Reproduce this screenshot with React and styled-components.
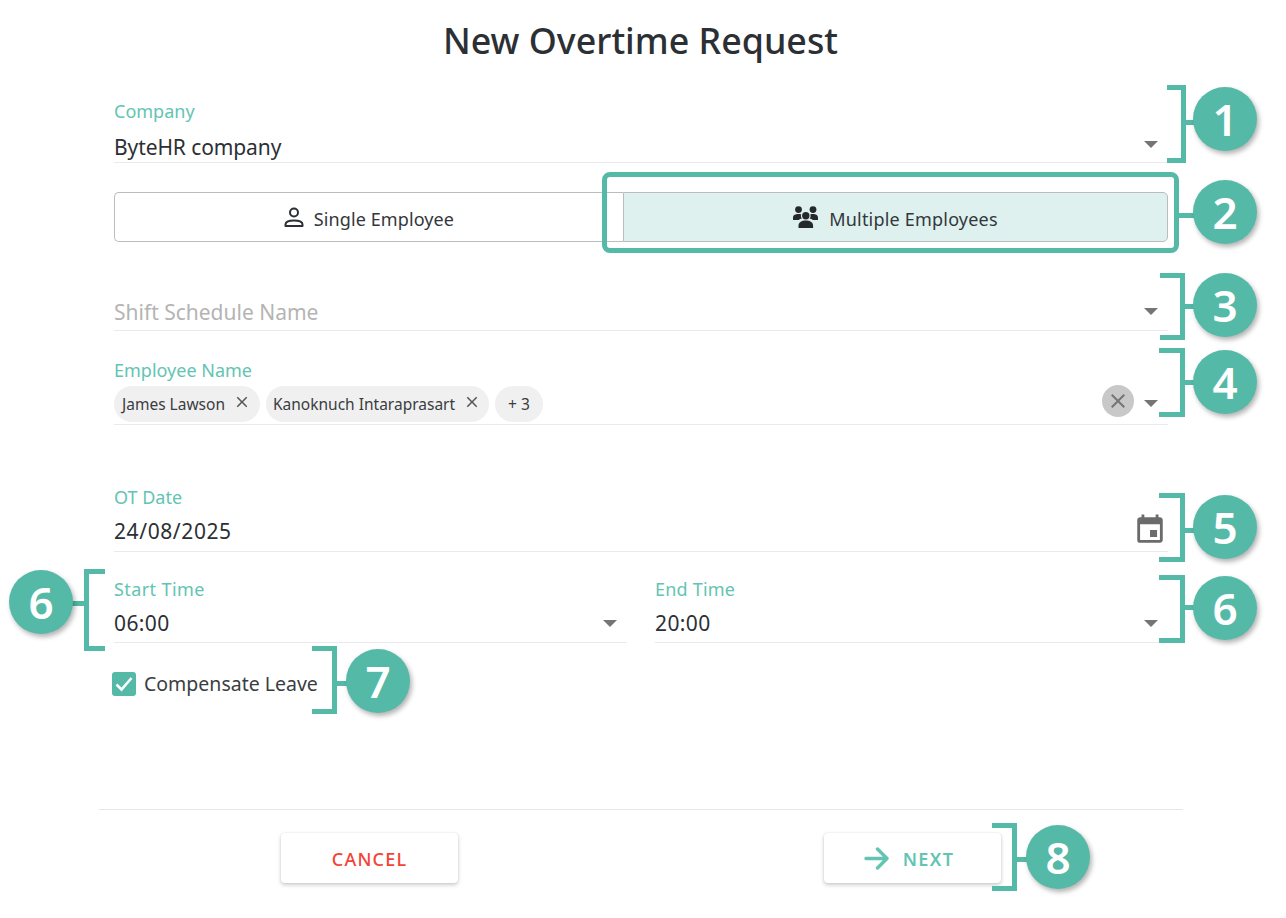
import React from "react";
import styled, { createGlobalStyle } from "styled-components";
import { MdClose, MdEvent } from "react-icons/md";

const TEAL = "#55b9a8";
const LABEL = "#63c4b2";
const TEXT = "#2c3034";
const LINE = "#e9e9ee";

const GlobalStyle = createGlobalStyle`
  html, body {
    margin: 0;
    padding: 0;
    background: #fff;
    font-family: "Noto Sans", "Open Sans", sans-serif;
    color: ${TEXT};
  }
`;

const Page = styled.div`
  position: relative;
  width: 1286px;
  height: 918px;
  overflow: hidden;
  padding-top: 14px;
  box-sizing: border-box;
`;

const Title = styled.h1`
  margin: 0 5px 0 0;
  font-size: 35.8px;
  line-height: 52px;
  font-weight: 500;
  text-align: center;
`;

const Form = styled.div`
  width: 1054px;
  margin: 33px 0 0 114px;
  display: flex;
  flex-direction: column;
`;

const Field = styled.div`
  position: relative;
  box-sizing: border-box;
  height: ${(p) => p.$height}px;
  margin-top: ${(p) => p.$top || 0}px;
  width: ${(p) => (p.$width ? `${p.$width}px` : "auto")};
  border-bottom: 1px solid ${LINE};
`;

const Label = styled.div`
  color: ${LABEL};
  font-size: 18px;
  line-height: 24px;
  letter-spacing: ${(p) => p.$spacing || 0}px;
`;

const Value = styled.div`
  font-size: 21px;
  line-height: 30px;
  margin-top: ${(p) => p.$gap ?? 7}px;
  letter-spacing: ${(p) => p.$spacing || 0}px;
  color: ${(p) => (p.$placeholder ? "#b4b4b4" : TEXT)};
`;

const Caret = styled.span`
  position: absolute;
  right: 10px;
  bottom: ${(p) => p.$bottom || 14}px;
  width: 0;
  height: 0;
  border-left: 7.5px solid transparent;
  border-right: 7.5px solid transparent;
  border-top: 7px solid #757575;
`;

const Toggle = styled.div`
  display: flex;
  height: 50px;
  margin-top: 29px;
`;

const ToggleButton = styled.div`
  box-sizing: border-box;
  width: ${(p) => p.$width}px;
  display: flex;
  align-items: center;
  justify-content: center;
  gap: ${(p) => (p.$active ? 11 : 10)}px;
  font-size: 18px;
  letter-spacing: ${(p) => (p.$active ? 0.2 : 0.1)}px;
  color: #33373b;
  background: ${(p) => (p.$active ? "#def1ee" : "#fff")};
  border: 1px solid #b9bdbd;
  border-right-width: ${(p) => (p.$active ? 1 : 0)}px;
  border-radius: ${(p) => (p.$active ? "0 5px 5px 0" : "5px 0 0 5px")};
  span {
    margin-top: 3px;
  }
`;

const ChipRow = styled.div`
  display: flex;
  gap: 6px;
  margin-top: 4px;
`;

const Chip = styled.div`
  display: flex;
  align-items: center;
  height: 36px;
  padding: ${(p) => p.$padding};
  gap: 8px;
  border-radius: 18px;
  background: #f0f0f1;
  color: #3a3d40;
  font-size: 15.5px;
  svg {
    margin-top: -5px;
    color: #555;
  }
`;

const ClearButton = styled.span`
  position: absolute;
  right: 34px;
  bottom: 7px;
  width: 32px;
  height: 32px;
  border-radius: 50%;
  background: #c8c8c8;
  color: #757575;
  display: flex;
  align-items: center;
  justify-content: center;
`;

const CalendarIcon = styled(MdEvent)`
  position: absolute;
  right: 1px;
  bottom: 4px;
  color: #6b6b6b;
`;

const TimeRow = styled.div`
  display: flex;
  justify-content: space-between;
`;

const CheckRow = styled.label`
  display: flex;
  align-items: center;
  gap: 8px;
  height: 24px;
  margin: 29px 0 0 -2px;
  font-size: 19.5px;
  color: #3a3d40;
  span:last-child {
    margin-top: -2px;
  }
`;

const CheckBox = styled.span`
  width: 24px;
  height: 24px;
  border-radius: 3px;
  background: ${TEAL};
  color: #fff;
  display: flex;
  align-items: center;
  justify-content: center;
`;

const Footer = styled.div`
  box-sizing: border-box;
  width: 1084px;
  height: 74px;
  margin: 113px 0 0 99px;
  border-top: 1px solid #e6e6e6;
  display: flex;
  align-items: flex-end;
  padding-left: 182px;
  gap: 366px;
`;

const ActionButton = styled.div`
  box-sizing: border-box;
  width: 177px;
  height: 50px;
  display: flex;
  align-items: center;
  justify-content: center;
  gap: 14px;
  padding-right: ${(p) => p.$inset || 0}px;
  border-radius: 4px;
  background: #fff;
  box-shadow: 0 2px 4px rgba(0, 0, 0, 0.2), 0 0 2px rgba(0, 0, 0, 0.1);
  font-size: 18px;
  font-weight: ${(p) => (p.$inset ? 600 : 500)};
  letter-spacing: ${(p) => (p.$inset ? 1.4 : 1.2)}px;
  color: ${(p) => p.$color};
  span {
    margin-top: 2px;
  }
`;

// annotation overlay: numbered badges, brackets and the highlight box
const Badge = styled.div`
  position: absolute;
  left: ${(p) => p.$x - 32}px;
  top: ${(p) => p.$y - 32}px;
  width: 64px;
  height: 64px;
  border-radius: 50%;
  background: ${TEAL};
  box-shadow: 2px 3px 5px rgba(0, 0, 0, 0.3);
  color: #fff;
  font-size: 44px;
  font-weight: 600;
  display: flex;
  align-items: center;
  justify-content: center;
`;

const Bracket = styled.div`
  position: absolute;
  box-sizing: border-box;
  left: ${(p) => p.$x}px;
  top: ${(p) => p.$y}px;
  width: ${(p) => p.$w}px;
  height: ${(p) => p.$h}px;
  border: 5px solid ${TEAL};
  ${(p) => (p.$flip ? "border-right: none;" : "border-left: none;")}
`;

const Connector = styled.div`
  position: absolute;
  left: ${(p) => p.$x}px;
  top: ${(p) => p.$y}px;
  width: ${(p) => p.$w}px;
  height: 5px;
  background: ${TEAL};
`;

const Highlight = styled.div`
  position: absolute;
  box-sizing: border-box;
  left: 602px;
  top: 172px;
  width: 577px;
  height: 81px;
  border: 5px solid ${TEAL};
  border-radius: 8px;
`;

const PersonIcon = () => (
  <svg width="20" height="20" viewBox="0 0 20 20" fill="none" stroke="#2c3034" strokeWidth="2">
    <circle cx="10" cy="5.5" r="4" />
    <path d="M1.5 19v-1.5c0-2.6 3.8-4 8.5-4s8.5 1.4 8.5 4V19z" strokeLinejoin="round" />
  </svg>
);

const GroupIcon = () => (
  <svg width="25" height="22" viewBox="0 0 25 22" fill="#26292c">
    <circle cx="5.5" cy="3.6" r="3.4" />
    <circle cx="20" cy="3.6" r="3.4" />
    <circle cx="12.8" cy="9.8" r="3.7" />
    <path d="M0 14v-2.5C0 9 2.5 8 5.5 8c1.1 0 2 .1 2.8.4-.3.5-.4 1-.4 1.5 0 1 .4 2 1 2.6-1.4.3-2.5.8-3.2 1.5z" />
    <path d="M25 14v-2.5C25 9 22.5 8 20 8c-1.1 0-2 .1-2.8.4.3.5.4 1 .4 1.5 0 1-.4 2-1 2.6 1.4.3 2.5.8 3.2 1.5z" />
    <path d="M5.5 22v-2.5c0-3 3-5 7.3-5s7.3 2 7.3 5V22z" />
  </svg>
);

const CheckIcon = () => (
  <svg width="18" height="16" viewBox="0 0 18 16" fill="none" stroke="#fff" strokeWidth="2.6">
    <path d="M1.5 8.5l5 5L16.5 2" />
  </svg>
);

const ArrowIcon = () => (
  <svg width="25" height="23" viewBox="0 0 25 23" fill="none" stroke={LABEL} strokeWidth="3.4" strokeLinecap="round" strokeLinejoin="round">
    <path d="M2 11.5h20M13.5 2l9.5 9.5-9.5 9.5" />
  </svg>
);

const brackets = [
  { x: 1167, y: 85, w: 19, h: 78, cy: 120, n: 1, bx: 1225, by: 119 },
  { x: 1160, y: 273, w: 25, h: 67, cy: 304, n: 3, bx: 1225, by: 305 },
  { x: 1159, y: 348, w: 26, h: 69, cy: 380, n: 4, bx: 1225, by: 382 },
  { x: 1159, y: 493, w: 26, h: 69, cy: 528, n: 5, bx: 1225, by: 527 },
  { x: 1159, y: 575, w: 26, h: 68, cy: 605, n: 6, bx: 1225, by: 608 },
  { x: 312, y: 646, w: 25, h: 68, cy: 681, n: 7, bx: 378, by: 681 },
  { x: 992, y: 823, w: 25, h: 68, cy: 857, n: 8, bx: 1058, by: 857 },
];

const App = () => (
  <>
    <GlobalStyle />
    <Page>
      <Title>New Overtime Request</Title>
      <Form>
        <Field $height={64}>
          <Label>Company</Label>
          <Value $gap={9} $spacing={-0.1}>ByteHR company</Value>
          <Caret />
        </Field>
        <Toggle>
          <ToggleButton $width={509}>
            <PersonIcon />
            <span>Single Employee</span>
          </ToggleButton>
          <ToggleButton $width={545} $active>
            <GroupIcon />
            <span>Multiple Employees</span>
          </ToggleButton>
        </Toggle>
        <Field $height={59} $top={30}>
          <Value $gap={25} $placeholder>Shift Schedule Name</Value>
          <Caret $bottom={15} />
        </Field>
        <Field $height={67} $top={27}>
          <Label>Employee Name</Label>
          <ChipRow>
            <Chip $padding="0 9px 0 8px">
              James Lawson
              <MdClose size={18} />
            </Chip>
            <Chip $padding="0 8px 0 7px">
              Kanoknuch Intaraprasart
              <MdClose size={18} />
            </Chip>
            <Chip $padding="0 13px">+ 3</Chip>
          </ChipRow>
          <ClearButton>
            <MdClose size={24} />
          </ClearButton>
          <Caret $bottom={17} />
        </Field>
        <Field $height={67} $top={60}>
          <Label>OT Date</Label>
          <Value $spacing={0.6}>24/08/2025</Value>
          <CalendarIcon size={34} />
        </Field>
        <TimeRow>
          <Field $height={66} $top={25} $width={513}>
            <Label $spacing={0.4}>Start Time</Label>
            <Value $spacing={0.4}>06:00</Value>
            <Caret $bottom={15} />
          </Field>
          <Field $height={66} $top={25} $width={513}>
            <Label $spacing={0.2}>End Time</Label>
            <Value $spacing={0.4}>20:00</Value>
            <Caret $bottom={15} />
          </Field>
        </TimeRow>
        <CheckRow>
          <CheckBox>
            <CheckIcon />
          </CheckBox>
          <span>Compensate Leave</span>
        </CheckRow>
      </Form>
      <Footer>
        <ActionButton $color="#f44336">
          <span>CANCEL</span>
        </ActionButton>
        <ActionButton $color={LABEL} $inset={7}>
          <ArrowIcon />
          <span>NEXT</span>
        </ActionButton>
      </Footer>

      <Highlight />
      <Connector $x={1179} $y={213} $w={16} />
      <Badge $x={1225} $y={212}>2</Badge>

      {brackets.map((b) => (
        <React.Fragment key={b.n}>
          <Bracket $x={b.x} $y={b.y} $w={b.w} $h={b.h} />
          <Connector $x={b.x + b.w - 1} $y={b.cy} $w={12} />
          <Badge $x={b.bx} $y={b.by}>{b.n}</Badge>
        </React.Fragment>
      ))}

      <Bracket $x={84} $y={569} $w={21} $h={82} $flip />
      <Connector $x={72} $y={601} $w={13} />
      <Badge $x={41} $y={602}>6</Badge>
    </Page>
  </>
);

export default App;
